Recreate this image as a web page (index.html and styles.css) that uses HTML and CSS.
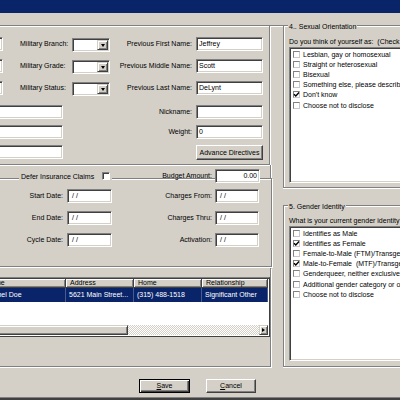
FILE: index.html
```html
<!DOCTYPE html>
<html>
<head>
<meta charset="utf-8">
<title>Patient Demographics</title>
<link rel="stylesheet" href="styles.css">
</head>
<body>
<div class="window">
  <div class="titlebar"></div>
  <div class="content">
    <div class="leftcol">
      <div class="panel1">
        <div class="field c1"></div>
        <div class="lbl c3">Military Branch:</div>
        <div class="combo c4"><span class="drop"></span></div>
        <div class="lbl rt c5">Previous First Name:</div>
        <div class="field c7">Jeffrey</div>

        <div class="field c1"></div>
        <div class="lbl c3">Military Grade:</div>
        <div class="combo c4"><span class="drop"></span></div>
        <div class="lbl rt c5">Previous Middle Name:</div>
        <div class="field c7">Scott</div>

        <div class="field c1"></div>
        <div class="lbl c3">Military Status:</div>
        <div class="combo c4"><span class="drop"></span></div>
        <div class="lbl rt c5">Previous Last Name:</div>
        <div class="field c7">DeLynt</div>

        <div class="field wide"></div>
        <div class="lbl rt c5">Nickname:</div>
        <div class="field c7"></div>

        <div class="field wide"></div>
        <div class="lbl rt c5">Weight:</div>
        <div class="field c7">0</div>

        <div class="field wide"></div>
        <div class="button c7">Advance Directives</div>
      </div>

      <div class="vline"></div>

      <div class="dates">
        <div class="cap">
          <div class="defer"><span>Defer Insurance Claims</span><span class="chk"></span></div>
          <div class="lbl budget-lbl">Budget Amount:</div>
          <div class="field budget">0.00</div>
        </div>
        <div class="dgrid">
          <div class="lbl rt d1">Start Date:</div>
          <div class="field date d3">/&nbsp;/</div>
          <div class="lbl rt d4">Charges From:</div>
          <div class="field date d6">/&nbsp;/</div>

          <div class="lbl rt d1">End Date:</div>
          <div class="field date d3">/&nbsp;/</div>
          <div class="lbl rt d4">Charges Thru:</div>
          <div class="field date d6">/&nbsp;/</div>

          <div class="lbl rt d1">Cycle Date:</div>
          <div class="field date d3">/&nbsp;/</div>
          <div class="lbl rt d4">Activation:</div>
          <div class="field date d6">/&nbsp;/</div>
        </div>
      </div>

      <div class="contacts">
        <div class="listview">
          <div class="lv-head">
            <div class="hcell w-name">Name</div>
            <div class="hcell w-addr">Address</div>
            <div class="hcell w-home">Home</div>
            <div class="hcell w-rel">Relationship</div>
          </div>
          <div class="lv-row selected">
            <div class="cell w-name">Rachel Doe</div>
            <div class="cell w-addr">5621 Main Street...</div>
            <div class="cell w-home">(315) 488-1518</div>
            <div class="cell w-rel">Significant Other</div>
          </div>
          <div class="lv-fill"></div>
          <div class="hscroll">
            <div class="thumb"></div>
            <div class="track"></div>
            <div class="arrowbtn"><span class="tri-right"></span></div>
          </div>
        </div>
      </div>

      <div class="btnrow">
        <div class="button dlg default"><span class="u">S</span>ave</div>
        <div class="button dlg"><span class="u">C</span>ancel</div>
      </div>
    </div>

    <div class="rightcol">
      <div class="group g4">
        <div class="gtitle">4.. Sexual Orientation</div>
        <div class="prompt">Do you think of yourself as:&nbsp; (Check one)</div>
        <div class="listbox">
          <div class="item"><span class="cb"></span>Lesbian, gay or homosexual</div>
          <div class="item"><span class="cb"></span>Straight or heterosexual</div>
          <div class="item"><span class="cb"></span>Bisexual</div>
          <div class="item"><span class="cb"></span>Something else, please describe</div>
          <div class="item"><span class="cb"><svg viewBox="0 0 7 7" width="7" height="7"><polyline points="1,3.2 2.8,5 6,1.6" fill="none" stroke="#000" stroke-width="1.4"/></svg></span>Don't know</div>
          <div class="item"><span class="cb"></span>Choose not to disclose</div>
        </div>
      </div>
      <div class="group g5">
        <div class="gtitle">5. Gender Identity</div>
        <div class="prompt">What is your current gender identity? (Check all that apply)</div>
        <div class="listbox">
          <div class="item"><span class="cb"></span>Identifies as Male</div>
          <div class="item"><span class="cb"><svg viewBox="0 0 7 7" width="7" height="7"><polyline points="1,3.2 2.8,5 6,1.6" fill="none" stroke="#000" stroke-width="1.4"/></svg></span>Identifies as Female</div>
          <div class="item"><span class="cb"></span>Female-to-Male (FTM)/Transgender Male</div>
          <div class="item"><span class="cb"><svg viewBox="0 0 7 7" width="7" height="7"><polyline points="1,3.2 2.8,5 6,1.6" fill="none" stroke="#000" stroke-width="1.4"/></svg></span>Male-to-Female&nbsp; (MTF)/Transgender Female</div>
          <div class="item"><span class="cb"></span>Genderqueer, neither exclusively male nor female</div>
          <div class="item"><span class="cb"></span>Additional gender category or other</div>
          <div class="item"><span class="cb"></span>Choose not to disclose</div>
        </div>
      </div>
    </div>
  </div>
  <div class="bottomedge"></div>
</div>
</body>
</html>
```

FILE: styles.css
```css
* { box-sizing: border-box; }
html, body { margin: 0; padding: 0; }
body {
  width: 400px;
  height: 400px;
  overflow: hidden;
  background: #d4d0c8;
  font-family: "Liberation Sans", Arial, sans-serif;
  font-size: 7px;
  color: #000;
}
.window {
  width: 400px;
  height: 400px;
  overflow: hidden;
  display: flex;
  flex-direction: column;
}
.titlebar { height: 13px; flex: none; background: #0a246a; }
.content {
  flex: 1;
  margin-top: 12px;
  border-top: 1px solid #808080;
  box-shadow: inset 0 1px 0 #fff;
  display: flex;
  min-height: 0;
}
.bottomedge {
  height: 3px;
  flex: none;
  border-top: 1px solid #808080;
  background: #404040;
}

/* left column */
.leftcol {
  flex: none;
  width: 312px;
  margin-left: -40px;
  display: flex;
  flex-direction: column;
}
.panel1 {
  width: 310px;
  height: 139px;
  border-right: 1px solid #808080;
  border-bottom: 1px solid #808080;
  box-shadow: 1px 1px 0 #fff;
  padding-top: 11px;
  display: grid;
  grid-template-columns: 43px 17px 52px 38px 82px 4px 67px;
  grid-template-rows: 22px 22px 24px 20px 20px 14px;
  align-items: start;
}
.vline {
  width: 311px;
  height: 13px;
  flex: none;
  border-right: 1px solid #808080;
  box-shadow: 1px 0 0 #fff;
}
.c1 { grid-column: 1; }
.c3 { grid-column: 3; }
.c4 { grid-column: 4; }
.c5 { grid-column: 5; }
.c7 { grid-column: 7; }
.wide { grid-column: 1 / span 3; width: 103px; }

.lbl {
  height: 14px;
  line-height: 14px;
  white-space: nowrap;
}
.rt { text-align: right; }

.field {
  height: 14px;
  background: #fff;
  border: 1px solid;
  border-color: #808080 #fff #fff #808080;
  box-shadow: inset 1px 1px 0 #404040, inset -1px -1px 0 #d4d0c8;
  padding: 0 2px;
  line-height: 12px;
  white-space: nowrap;
  overflow: hidden;
}
.combo {
  height: 14px;
  margin-top: 1px;
  background: #fff;
  border: 1px solid;
  border-color: #808080 #fff #fff #808080;
  box-shadow: inset 1px 1px 0 #404040, inset -1px -1px 0 #d4d0c8;
  padding: 1px;
  display: flex;
  justify-content: flex-end;
}
.drop {
  width: 11px;
  height: 100%;
  background: #d4d0c8;
  border: 1px solid;
  border-color: #d4d0c8 #404040 #404040 #d4d0c8;
  box-shadow: inset 1px 1px 0 #fff, inset -1px -1px 0 #808080;
  display: flex;
  align-items: center;
  justify-content: center;
}
.drop::after {
  content: "";
  border-left: 2.5px solid transparent;
  border-right: 2.5px solid transparent;
  border-top: 3px solid #000;
}
.button {
  height: 15px;
  background: #d4d0c8;
  border: 1px solid;
  border-color: #fff #404040 #404040 #fff;
  box-shadow: inset -1px -1px 0 #808080;
  text-align: center;
  line-height: 13px;
  white-space: nowrap;
}

/* dates group */
.dates {
  width: 312px;
  height: 89px;
  flex: none;
  border-top: 1px solid #808080;
  border-right: 1px solid #808080;
  border-bottom: 1px solid #808080;
  box-shadow: inset 0 1px 0 #fff, 1px 1px 0 #fff;
}
.cap {
  display: flex;
  align-items: center;
  height: 14px;
  margin-top: -10px;
}
.defer {
  margin-left: 59px;
  background: #d4d0c8;
  padding: 0 2px;
  height: 10px;
  display: flex;
  align-items: center;
  gap: 8px;
  white-space: nowrap;
}
.chk {
  width: 8px;
  height: 8px;
  background: #fff;
  border: 1px solid;
  border-color: #808080 #fff #fff #808080;
  box-shadow: inset 1px 1px 0 #404040;
}
.budget-lbl { margin-left: auto; }
.field.budget {
  width: 45px;
  margin-left: 3px;
  margin-right: 11px;
  text-align: right;
}
.dgrid {
  margin-top: 6px;
  display: grid;
  grid-template-columns: 103px 4px 45px 100px 3px 44px;
  grid-template-rows: 14px 14px 14px;
  row-gap: 8px;
}
.d1 { grid-column: 1; }
.d3 { grid-column: 3; }
.d4 { grid-column: 4; }
.d6 { grid-column: 6; }
.field.date { padding-left: 4px; }

/* contacts list */
.contacts {
  margin-top: 1px;
  width: 311px;
  height: 99px;
  flex: none;
  border-right: 1px solid #808080;
  border-bottom: 1px solid #808080;
  box-shadow: 1px 1px 0 #fff;
  padding-top: 9px;
}
.listview {
  margin-left: 20px;
  width: 290px;
  height: 60px;
  background: #fff;
  border: 1px solid;
  border-color: #808080 #404040 #404040 #808080;
  box-shadow: inset 1px 1px 0 #404040;
  padding: 1px 1px 0 1px;
  display: flex;
  flex-direction: column;
}
.lv-head, .lv-row { display: flex; flex: none; }
.lv-head { height: 9px; }
.hcell {
  height: 9px;
  line-height: 8px;
  background: #d4d0c8;
  border-right: 1px solid #404040;
  border-bottom: 1px solid #404040;
  box-shadow: inset 1px 1px 0 #fff, inset -1px -1px 0 #808080;
  padding-left: 4px;
  white-space: nowrap;
  overflow: hidden;
}
.w-name { width: 84px; }
.w-addr { width: 68px; }
.w-home { width: 68px; }
.w-rel { width: 66px; }
.lv-row { height: 14px; }
.lv-row.selected { background: #0a246a; color: #fff; }
.cell {
  line-height: 14px;
  padding-left: 3px;
  border-right: 1px solid rgba(255, 255, 255, 0.25);
  white-space: nowrap;
  overflow: hidden;
}
.lv-fill { flex: 1; }
.hscroll { height: 10px; flex: none; display: flex; margin-bottom: 1px; }
.thumb {
  width: 146px;
  background: #d4d0c8;
  border: 1px solid;
  border-color: #d4d0c8 #404040 #404040 #d4d0c8;
  box-shadow: inset 1px 1px 0 #fff, inset -1px -1px 0 #808080;
}
.track {
  flex: 1;
  background: repeating-conic-gradient(#fff 0 25%, #d4d0c8 0 50%) 0 0 / 2px 2px;
}
.arrowbtn {
  width: 9px;
  background: #d4d0c8;
  border: 1px solid;
  border-color: #d4d0c8 #404040 #404040 #d4d0c8;
  box-shadow: inset 1px 1px 0 #fff, inset -1px -1px 0 #808080;
  display: flex;
  align-items: center;
  justify-content: center;
}
.tri-right {
  border-top: 2.5px solid transparent;
  border-bottom: 2.5px solid transparent;
  border-left: 3px solid #000;
}

/* dialog buttons */
.btnrow {
  margin-top: 12px;
  padding-left: 179px;
  display: flex;
  gap: 16px;
}
.button.dlg { width: 50px; height: 14px; line-height: 12px; }
.button.default {
  width: 51px;
  border: 1px solid #000;
  box-shadow: inset 1px 1px 0 #fff, inset -1px -1px 0 #404040, inset -2px -2px 0 #808080;
}
.u { text-decoration: underline; }

/* right column */
.rightcol {
  flex: none;
  width: 200px;
  padding-left: 11px;
  display: flex;
  flex-direction: column;
}
.group {
  border-left: 1px solid #808080;
  display: flex;
  flex-direction: column;
  align-items: flex-start;
  flex: none;
}
.g4 {
  height: 162px;
  border-bottom: 1px solid #808080;
  box-shadow: inset 1px 0 0 #fff, 0 1px 0 #fff;
}
.g5 {
  margin-top: 17px;
  height: 162px;
  border-top: 1px solid #808080;
  border-bottom: 1px solid #808080;
  box-shadow: inset 1px 1px 0 #fff, 0 1px 0 #fff;
}
.gtitle {
  margin-top: -4px;
  margin-left: 4px;
  padding: 0 1px;
  height: 9px;
  line-height: 9px;
  background: #d4d0c8;
  white-space: nowrap;
}
.prompt {
  height: 9px;
  line-height: 9px;
  padding-left: 5px;
  white-space: nowrap;
}
.g4 .prompt { margin-top: 6px; }
.g5 .prompt { margin-top: 5px; }
.listbox {
  margin-top: 1px;
  margin-left: 5px;
  width: 200px;
  height: 135px;
  background: #fff;
  border: 1px solid;
  border-color: #808080 #fff #fff #808080;
  box-shadow: inset 1px 1px 0 #404040, inset -1px -1px 0 #d4d0c8;
  padding: 1px 1px 0 1px;
}
.g4 .listbox { height: 136px; }
.item {
  height: 10.2px;
  display: flex;
  align-items: center;
  gap: 3px;
  padding-left: 2px;
  white-space: nowrap;
}
.cb {
  width: 7px;
  height: 7px;
  flex: none;
  background: #fff;
  border: 1px solid;
  border-color: #808080 #c8c8c8 #c8c8c8 #808080;
  display: flex;
  align-items: center;
  justify-content: center;
}
.cb svg { display: block; flex: none; }
```
